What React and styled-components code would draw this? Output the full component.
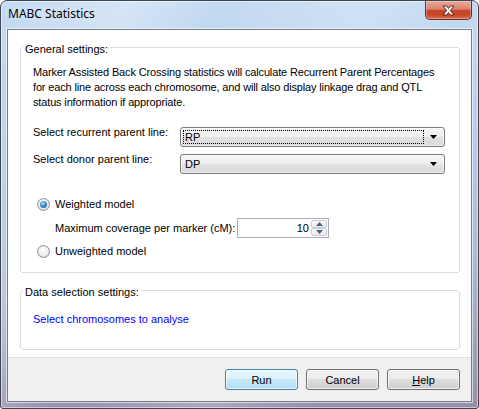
import React from 'react'
import styled, { createGlobalStyle } from 'styled-components'

const GlobalStyle = createGlobalStyle`
  html, body {
    margin: 0;
    padding: 0;
    background: #ffffff;
  }
  body {
    font-family: "Liberation Sans", Arial, sans-serif;
    font-size: 11px;
    color: #000;
  }
`

const Window = styled.div`
  box-sizing: border-box;
  width: 479px;
  height: 409px;
  border: 1px solid #3d4754;
  border-radius: 7px 7px 3px 3px;
  padding: 0 6px 6px;
  display: flex;
  flex-direction: column;
  background:
    linear-gradient(112deg, rgba(255,255,255,0) 0%, rgba(255,255,255,0.3) 20%, rgba(255,255,255,0) 34%, rgba(255,255,255,0.22) 58%, rgba(255,255,255,0) 74%),
    linear-gradient(180deg, #c4daf2 0%, #b6cfea 30%, #a6bad5 65%, #958fa9 100%);
  box-shadow: inset 0 0 0 1px rgba(255,255,255,0.5);
`

const TitleBar = styled.div`
  height: 28px;
  display: flex;
  align-items: flex-start;
  justify-content: space-between;
`

const Title = styled.span`
  font-family: "Noto Sans", "Open Sans", sans-serif;
  font-size: 12px;
  line-height: 16px;
  margin: 5px 0 0 1px;
  text-shadow: 0 0 6px rgba(255,255,255,0.9);
`

const CloseButton = styled.div`
  width: 47px;
  height: 19px;
  box-sizing: border-box;
  border: 1px solid #6a2d25;
  border-top: none;
  border-radius: 0 0 5px 5px;
  background: linear-gradient(180deg, #e8aa9c 0%, #d98471 45%, #c6472e 52%, #c8452a 75%, #de6e4b 100%);
  box-shadow: inset 0 0 0 1px rgba(255,255,255,0.3);
  display: flex;
  align-items: center;
  justify-content: center;
`

const Client = styled.div`
  flex: 1;
  display: flex;
  flex-direction: column;
  border: 1px solid #6f7d8c;
  box-shadow: 0 0 0 1px rgba(255,255,255,0.6);
  background: #ffffff;
`

const Body = styled.div`
  flex: 1;
  padding: 8px 11px 0 12px;
  display: flex;
  flex-direction: column;
  gap: 8px;
`

const Group = styled.fieldset`
  margin: 0;
  padding: ${({ $pad }) => $pad};
  border: 1px solid #d5dfe5;
  border-radius: 3px;
  min-width: 0;
`

const Legend = styled.legend`
  padding: 4px 2px 0;
  margin-left: -10px;
  line-height: 14px;
`

const Intro = styled.p`
  margin: 0;
  line-height: 15px;
  white-space: nowrap;
  letter-spacing: -0.15px;
`

const FieldRow = styled.div`
  display: flex;
  align-items: flex-start;
  margin-top: ${({ $mt }) => $mt}px;
`

const FieldLabel = styled.span`
  width: 147px;
  line-height: 14px;
  margin-top: -2px;
`

const Combo = styled.div`
  width: 265px;
  height: 20px;
  box-sizing: border-box;
  border: 1px solid #7a7a7a;
  border-radius: 3px;
  padding: 2px;
  display: flex;
  align-items: center;
  background: linear-gradient(180deg, #f5f5f5 0%, #eeeeee 50%, #e3e3e3 50%, #d9d9d9 100%);
  box-shadow: inset 0 0 0 1px rgba(255,255,255,0.7);
`

const ComboText = styled.span`
  flex: 1;
  height: 14px;
  box-sizing: border-box;
  line-height: 13px;
  padding-left: 1px;
  border: 1px dotted ${({ $focused }) => ($focused ? '#000' : 'transparent')};
`

const ComboArrow = styled.span`
  width: 18px;
  display: flex;
  justify-content: center;
`

const RadioRow = styled.label`
  display: flex;
  align-items: center;
  gap: 5px;
  height: 16px;
  margin: ${({ $mt }) => $mt}px 0 0 4px;
`

const RadioCircle = styled.span`
  width: 13px;
  height: 13px;
  box-sizing: border-box;
  border-radius: 50%;
  border: 1px solid #8e8f8f;
  background: radial-gradient(circle at 50% 40%, #ffffff 0%, #ececec 55%, #cfcfcf 100%);
  display: flex;
  align-items: center;
  justify-content: center;
`

const RadioDot = styled.span`
  width: 7px;
  height: 7px;
  border-radius: 50%;
  background: radial-gradient(circle at 40% 35%, #b8e4ff 0%, #3c8bd2 45%, #1b4f88 100%);
`

const CoverageRow = styled.div`
  display: flex;
  align-items: center;
  margin: 6px 0 0 22px;
`

const CoverageLabel = styled.span`
  width: 182px;
`

const SpinBox = styled.div`
  width: 92px;
  height: 20px;
  box-sizing: border-box;
  border: 1px solid #abadb3;
  background: #ffffff;
  padding: 1px;
  display: flex;
`

const SpinValue = styled.span`
  flex: 1;
  text-align: right;
  line-height: 16px;
  padding-right: 2px;
`

const SpinButtons = styled.div`
  width: 16px;
  display: flex;
  flex-direction: column;
`

const SpinButton = styled.div`
  flex: 1;
  border: 1px solid #c9ced6;
  border-radius: 2px;
  background: linear-gradient(180deg, #f8fafc 0%, #e6ebf1 100%);
  display: flex;
  align-items: center;
  justify-content: center;
`

const Link = styled.a`
  display: block;
  line-height: 15px;
  color: #0000ff;
  text-decoration: none;
`

const Footer = styled.div`
  height: 44px;
  box-sizing: border-box;
  border-top: 1px solid #dfdfdf;
  background: #f0f0f0;
  display: flex;
  justify-content: flex-end;
  align-items: flex-start;
  gap: 8px;
  padding: 11px 11px 0 0;
`

const Button = styled.button`
  width: 73px;
  height: 21px;
  box-sizing: border-box;
  padding: 0;
  font-family: inherit;
  font-size: 11px;
  color: #000;
  border: 1px solid ${({ $primary }) => ($primary ? '#3c7fb1' : '#707070')};
  border-radius: 3px;
  background: ${({ $primary }) =>
    $primary
      ? 'linear-gradient(180deg, #eaf6fd 0%, #d9f0fc 50%, #c6e8fa 50%, #b4def5 100%)'
      : 'linear-gradient(180deg, #f2f2f2 0%, #ebebeb 50%, #dddddd 50%, #cfcfcf 100%)'};
  box-shadow: inset 0 0 0 1px rgba(255,255,255,0.7);
`

const Arrow = ({ up, color = '#000' }) => (
  <svg width="7" height="4" viewBox="0 0 7 4">
    <polygon points={up ? '3.5,0 7,4 0,4' : '0,0 7,0 3.5,4'} fill={color} />
  </svg>
)

const CloseIcon = () => (
  <svg width="13" height="11" viewBox="0 0 13 11">
    <polygon
      points="1,1 4.5,1 6.5,3.5 8.5,1 12,1 8.3,5.5 12,10 8.5,10 6.5,7.5 4.5,10 1,10 4.7,5.5"
      fill="#ffffff"
      stroke="#4a1a14"
      strokeWidth="0.9"
      strokeLinejoin="round"
    />
  </svg>
)

function ParentCombo({ value, focused }) {
  return (
    <Combo>
      <ComboText $focused={focused}>{value}</ComboText>
      <ComboArrow><Arrow /></ComboArrow>
    </Combo>
  )
}

function RadioOption({ checked, label, mt }) {
  return (
    <RadioRow $mt={mt}>
      <RadioCircle>{checked && <RadioDot />}</RadioCircle>
      {label}
    </RadioRow>
  )
}

export default function App() {
  return (
    <>
      <GlobalStyle />
      <Window>
        <TitleBar>
          <Title>MABC Statistics</Title>
          <CloseButton><CloseIcon /></CloseButton>
        </TitleBar>
        <Client>
          <Body>
            <Group $pad="9px 13px 13px 12px">
              <Legend>General settings:</Legend>
              <Intro>
                Marker Assisted Back Crossing statistics will calculate Recurrent Parent Percentages<br />
                for each line across each chromosome, and will also display linkage drag and QTL<br />
                status information if appropriate.
              </Intro>
              <FieldRow $mt={17}>
                <FieldLabel>Select recurrent parent line:</FieldLabel>
                <ParentCombo value="RP" focused />
              </FieldRow>
              <FieldRow $mt={7}>
                <FieldLabel>Select donor parent line:</FieldLabel>
                <ParentCombo value="DP" />
              </FieldRow>
              <RadioOption checked label="Weighted model" mt={22} />
              <CoverageRow>
                <CoverageLabel>Maximum coverage per marker (cM):</CoverageLabel>
                <SpinBox>
                  <SpinValue>10</SpinValue>
                  <SpinButtons>
                    <SpinButton><Arrow up color="#4d6185" /></SpinButton>
                    <SpinButton><Arrow color="#4d6185" /></SpinButton>
                  </SpinButtons>
                </SpinBox>
              </CoverageRow>
              <RadioOption label="Unweighted model" mt={5} />
            </Group>
            <Group $pad="13px 12px 22px 12px">
              <Legend>Data selection settings:</Legend>
              <Link href="#">Select chromosomes to analyse</Link>
            </Group>
          </Body>
          <Footer>
            <Button $primary>Run</Button>
            <Button>Cancel</Button>
            <Button><u>H</u>elp</Button>
          </Footer>
        </Client>
      </Window>
    </>
  )
}
